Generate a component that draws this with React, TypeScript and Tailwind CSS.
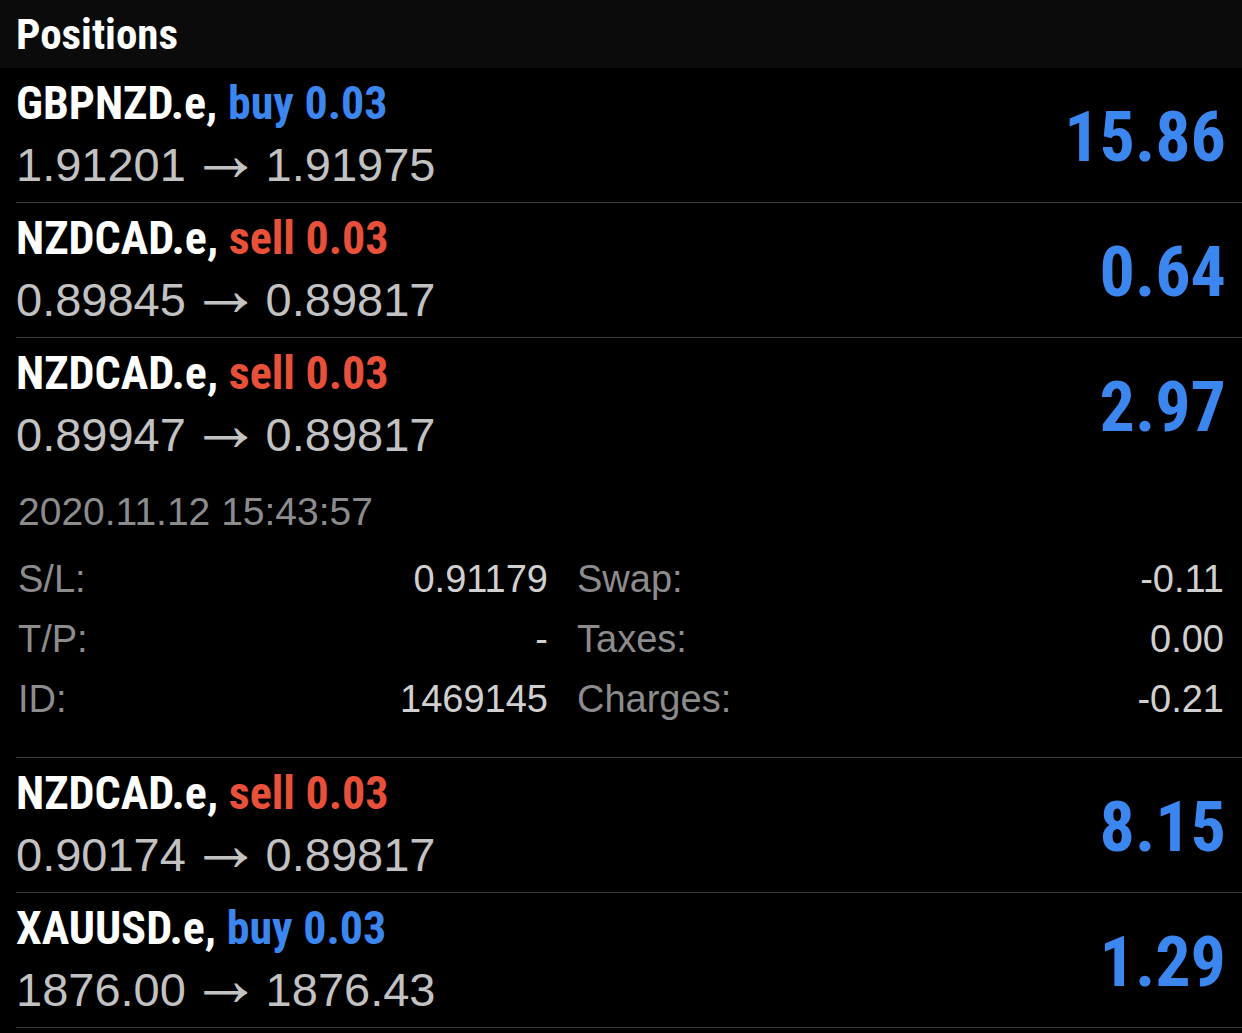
import React from 'react';

interface Position {
  symbol: string;
  side: 'buy' | 'sell';
  volume: string;
  open: string;
  current: string;
  profit: string;
  expanded?: boolean;
}

const POSITIONS: Position[] = [
  { symbol: 'GBPNZD.e', side: 'buy', volume: '0.03', open: '1.91201', current: '1.91975', profit: '15.86' },
  { symbol: 'NZDCAD.e', side: 'sell', volume: '0.03', open: '0.89845', current: '0.89817', profit: '0.64' },
  { symbol: 'NZDCAD.e', side: 'sell', volume: '0.03', open: '0.89947', current: '0.89817', profit: '2.97', expanded: true },
  { symbol: 'NZDCAD.e', side: 'sell', volume: '0.03', open: '0.90174', current: '0.89817', profit: '8.15' },
  { symbol: 'XAUUSD.e', side: 'buy', volume: '0.03', open: '1876.00', current: '1876.43', profit: '1.29' },
];

const condensed = "font-['Roboto_Condensed','Open_Sans',sans-serif] font-bold";
const regular = "font-['Liberation_Sans',Arial,sans-serif]";

const LEFT_DETAILS = [
  ['S/L:', '0.91179'],
  ['T/P:', '-'],
  ['ID:', '1469145'],
];

const RIGHT_DETAILS = [
  ['Swap:', '-0.11'],
  ['Taxes:', '0.00'],
  ['Charges:', '-0.21'],
];

function DetailCell({ label, value }: { label: string; value: string }) {
  return (
    <div className="flex justify-between h-[60px] leading-[60px]">
      <span className="text-[#8c8c8c]">{label}</span>
      <span className="text-[#d0d0d0]">{value}</span>
    </div>
  );
}

function Details() {
  return (
    <div className={`${regular} text-[38px] px-[2px] pt-[10px] pb-[28px]`}>
      <div className="text-[39px] leading-[60px] text-[#8c8c8c]">2020.11.12 15:43:57</div>
      <div className="mt-[7px] grid grid-cols-[530px_1fr] gap-x-[29px]">
        {LEFT_DETAILS.map(([label, value], i) => (
          <React.Fragment key={label}>
            <DetailCell label={label} value={value} />
            <DetailCell label={RIGHT_DETAILS[i][0]} value={RIGHT_DETAILS[i][1]} />
          </React.Fragment>
        ))}
      </div>
    </div>
  );
}

function PositionRow({ p }: { p: Position }) {
  const sideColor = p.side === 'buy' ? 'text-[#3c86f0]' : 'text-[#e8503a]';
  return (
    <div className="pl-4">
      <div className="border-b border-[#3a3a3a] pr-4">
        <div className="h-[134px] flex items-center justify-between">
          <div className="pt-[4px] self-start">
            <div className={`${condensed} text-[46px] leading-[62px] text-white`}>
              {p.symbol},{' '}
              <span className={sideColor}>
                {p.side} {p.volume}
              </span>
            </div>
            <div className={`${regular} text-[47px] leading-[62px] text-[#c2c2c2]`}>
              {p.open}{' '}
              <span className="font-['Noto_Sans_Math','DejaVu_Sans',sans-serif] mx-[3px]">→</span>{' '}
              {p.current}
            </div>
          </div>
          <div className={`${condensed} text-[70px] leading-none text-[#3c86f0] mt-[3px]`}>{p.profit}</div>
        </div>
        {p.expanded && <Details />}
      </div>
    </div>
  );
}

export default function App() {
  return (
    <div className="w-[1242px] h-[1033px] bg-black overflow-hidden">
      <div className="h-[68px] bg-[#0b0b0b] px-4 flex items-center">
        <h1 className={`${condensed} text-[43px] leading-none text-white`}>Positions</h1>
      </div>
      {POSITIONS.map((p, i) => (
        <PositionRow key={i} p={p} />
      ))}
    </div>
  );
}
